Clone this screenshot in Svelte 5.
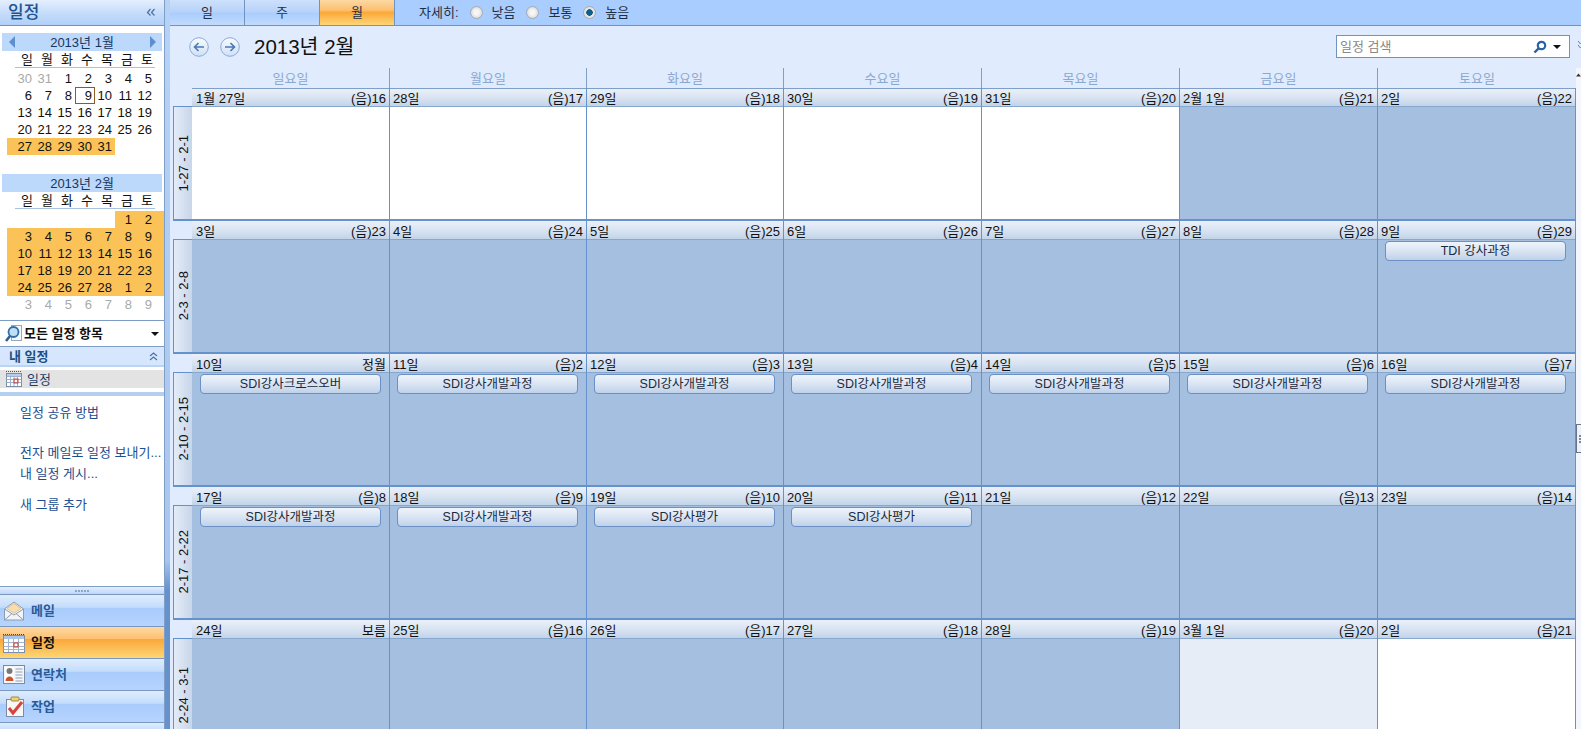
<script>
  const jan = [
    [[30,1],[31,1],[1],[2],[3],[4],[5]],
    [[6],[7],[8],[9,0,1],[10],[11],[12]],
    [[13],[14],[15],[16],[17],[18],[19]],
    [[20],[21],[22],[23],[24],[25],[26]],
    [[27,0,0,1],[28,0,0,1],[29,0,0,1],[30,0,0,1],[31,0,0,1]]
  ];
  const feb = [
    [[''],[''],[''],[''],[''],[1,0,0,1],[2,0,0,1]],
    [3,4,5,6,7,8,9].map(d=>[d,0,0,1]),
    [10,11,12,13,14,15,16].map(d=>[d,0,0,1]),
    [17,18,19,20,21,22,23].map(d=>[d,0,0,1]),
    [24,25,26,27,28,1,2].map(d=>[d,0,0,1]),
    [3,4,5,6,7,8,9].map(d=>[d,1])
  ];
  const wd = ['일','월','화','수','목','금','토'];
  const names = ['일요일','월요일','화요일','수요일','목요일','금요일','토요일'];
  const W='w', B='b', L='l';
  const weeks = [
    {label:'1-27 - 2-1', days:[['1월 27일','(음)16',W],['28일','(음)17',W],['29일','(음)18',W],['30일','(음)19',W],['31일','(음)20',W],['2월 1일','(음)21',B],['2일','(음)22',B]]},
    {label:'2-3 - 2-8', days:[['3일','(음)23',B],['4일','(음)24',B],['5일','(음)25',B],['6일','(음)26',B],['7일','(음)27',B],['8일','(음)28',B],['9일','(음)29',B,'TDI 강사과정']]},
    {label:'2-10 - 2-15', days:[['10일','정월',B,'SDI강사크로스오버'],['11일','(음)2',B,'SDI강사개발과정'],['12일','(음)3',B,'SDI강사개발과정'],['13일','(음)4',B,'SDI강사개발과정'],['14일','(음)5',B,'SDI강사개발과정'],['15일','(음)6',B,'SDI강사개발과정'],['16일','(음)7',B,'SDI강사개발과정']]},
    {label:'2-17 - 2-22', days:[['17일','(음)8',B,'SDI강사개발과정'],['18일','(음)9',B,'SDI강사개발과정'],['19일','(음)10',B,'SDI강사평가'],['20일','(음)11',B,'SDI강사평가'],['21일','(음)12',B],['22일','(음)13',B],['23일','(음)14',B]]},
    {label:'2-24 - 3-1', days:[['24일','보름',B],['25일','(음)16',B],['26일','(음)17',B],['27일','(음)18',B],['28일','(음)19',B],['3월 1일','(음)20',L],['2일','(음)21',W]]}
  ];
</script>

{#snippet month(title, rows, arrows)}
  <div class="mhead">
    {#if arrows}<svg class="marr" width="8" height="14" viewBox="0 0 8 14"><path d="M7 1v12L1 7z" fill="#5d8fd0"/></svg>{/if}
    <span>{title}</span>
    {#if arrows}<svg class="marr r" width="8" height="14" viewBox="0 0 8 14"><path d="M1 1v12l6-6z" fill="#5d8fd0"/></svg>{/if}
  </div>
  <div class="wds">{#each wd as w}<span>{w}</span>{/each}</div>
  <div class="days">
    {#each rows as r}
      <div class="drow">
        {#each r as c, i}
          <span class="d" class:mut={c[1]} class:today={c[2]} class:sel={c[3]} class:first={i===0} class:last={i===6}>{c[0]}</span>
        {/each}
      </div>
    {/each}
  </div>
{/snippet}

<div class="app">
  <aside class="side">
    <div class="stitle"><span>일정</span>
      <svg width="10" height="9" viewBox="0 0 10 9"><path d="M4.500 1 1.500 4.500l3 3M8.500 1l-3 3.500 3 3" fill="none" stroke="#4c6f9e" stroke-width="1.200"/></svg>
    </div>
    <div class="cal">
      {@render month('2013년 1월', jan, true)}
      <div class="gap"></div>
      {@render month('2013년 2월', feb, false)}
    </div>
    <div class="all">
      <svg width="19" height="19" viewBox="0 0 19 19"><rect x="7.500" y="1.500" width="10" height="15" fill="#f6f9fc" stroke="#9aa8bc"/><circle cx="9.500" cy="8" r="5" fill="#bfe0f4" stroke="#2f6ea8" stroke-width="1.800"/><path d="M6 12 2 17" stroke="#2f5f94" stroke-width="2.600"/></svg>
      <b>모든 일정 항목</b>
      <i class="tri"></i>
    </div>
    <div class="mine"><span>내 일정</span>
      <svg width="9" height="9" viewBox="0 0 9 9"><path d="M1 4 4.500 1 8 4M1 8l3.500-3L8 8" fill="none" stroke="#4c6f9e" stroke-width="1.100"/></svg>
    </div>
    <div class="item">
      <svg width="16" height="16" viewBox="0 0 16 16"><rect x=".5" y="2.500" width="15" height="13" fill="#fff" stroke="#7d8fa8"/><path d="M0 .5h16" stroke="#555" stroke-dasharray="1 1"/><rect x="1" y="3" width="14" height="2" fill="#b9cfe8"/><path d="M.5 5.500h15M.5 8.500h15M.5 11.500h15M4.500 5v10M8 5v10M11.500 5v10" stroke="#9db0cc"/><rect x="8" y="8" width="4" height="4" fill="none" stroke="#c8453a"/></svg>
      <span>일정</span>
    </div>
    <div class="bar"></div>
    <div class="links">
      <a class="l1">일정 공유 방법</a>
      <a class="l2">전자 메일로 일정 보내기...</a>
      <a class="l3">내 일정 게시...</a>
      <a class="l4">새 그룹 추가</a>
    </div>
    <div class="split"><i></i><i></i><i></i><i></i><i></i></div>
    <div class="nav">
      <svg width="22" height="22" viewBox="0 0 22 22"><path d="M1.500 9 11 2l9.500 7v11h-19z" fill="#f2f4f7" stroke="#8d9cb0"/><path d="M4 8.500 11 3.500l7 5-7 4.500z" fill="#f7deb0" stroke="#e0c48c"/><path d="M1.500 9 11 15l9.500-6M1.500 20 9 13.500M20.500 20 13 13.500" fill="none" stroke="#8d9cb0"/></svg>
      <span>메일</span>
    </div>
    <div class="nav act">
      <svg width="22" height="22" viewBox="0 0 22 22"><rect x=".5" y="3.500" width="21" height="17" fill="#fff" stroke="#7d8fa8"/><path d="M0 2.500h22" stroke="#444" stroke-dasharray="1 1"/><rect x="1" y="4" width="20" height="3" fill="#a9c6e8"/><path d="M.5 10.500h21M.5 14.500h21M.5 17.500h21M5.500 7v13M10.500 7v13M15.500 7v13" stroke="#a3b3c9"/><rect x="11" y="11" width="4" height="4" fill="none" stroke="#cc3a2a"/></svg>
      <span>일정</span>
    </div>
    <div class="nav">
      <svg width="22" height="20" viewBox="0 0 22 20"><rect x=".5" y=".5" width="21" height="18" fill="#f4f6f9" stroke="#7d8ca0"/><rect x="2" y="2" width="9" height="15" fill="#fff"/><circle cx="6.500" cy="6" r="3" fill="#7a7a7a"/><path d="M2.500 16c0-6 8-6 8 0z" fill="#c9542c"/><path d="M12.500 4h7M12.500 7h7M12.500 10h7M12.500 13h7M12.500 16h7" stroke="#8fa0b8"/></svg>
      <span>연락처</span>
    </div>
    <div class="nav">
      <svg width="22" height="22" viewBox="0 0 22 22"><rect x="3.500" y="3.500" width="17" height="17" fill="#f7f7f7" stroke="#7d8ca0"/><rect x="8" y="1" width="8" height="4" rx="1" fill="#f0d070" stroke="#a08a40"/><path d="M6 12l4 5 9-11" fill="none" stroke="#d8433c" stroke-width="3"/></svg>
      <span>작업</span>
    </div>
    <div class="nav stub"></div>
  </aside>
  <div class="sep"></div>
  <main class="main">
    <div class="tool">
      <div class="tab">일</div><div class="tab">주</div><div class="tab on">월</div>
      <div class="detail">
        <span>자세히:</span>
        <i class="radio"></i><span>낮음</span>
        <i class="radio"></i><span>보통</span>
        <i class="radio chk"></i><span>높음</span>
      </div>
    </div>
    <div class="top">
      <svg width="20" height="20" viewBox="0 0 20 20"><defs><linearGradient id="rb" x1="0" y1="0" x2="0" y2="1"><stop offset="0" stop-color="#f7fbff"/><stop offset="1" stop-color="#cfe0f6"/></linearGradient></defs><circle cx="10" cy="10" r="9.300" fill="url(#rb)" stroke="#8aa9d4"/><path d="M15 10H6M9.500 6 5.500 10l4 4" fill="none" stroke="#4a78b4" stroke-width="1.600"/></svg>
      <svg class="nx" width="20" height="20" viewBox="0 0 20 20"><circle cx="10" cy="10" r="9.300" fill="url(#rb)" stroke="#8aa9d4"/><path d="M5 10h9M10.500 6l4 4-4 4" fill="none" stroke="#4a78b4" stroke-width="1.600"/></svg>
      <h1>2013년 2월</h1>
      <div class="search"><span>일정 검색</span>
        <svg width="14" height="14" viewBox="0 0 14 14"><circle cx="8.500" cy="5.500" r="3.700" fill="#fff" stroke="#2a62a8" stroke-width="2.200"/><path d="M5.500 8.500 1.500 12.500" stroke="#2a5f9e" stroke-width="2.400"/></svg>
        <i class="tri"></i>
      </div>
      <svg class="more" width="7" height="9" viewBox="0 0 7 9"><path d="M1 1l2.500 3L6 1M1 5l2.500 3L6 5" fill="none" stroke="#5f7ea6"/></svg>
    </div>
    <div class="grid">
      <div class="names">
        {#each names as n}<div>{n}</div>{/each}
      </div>
      {#each weeks as w}
        <div class="week">
          <div class="wl"><span>{w.label}</span></div>
          <div class="cols">
            {#each w.days as d}
              <div class="col">
                <div class="dh"><span>{d[0]}</span><span>{d[1]}</span></div>
                <div class="dbody {d[2]}">
                  {#if d[3]}<div class="ev">{d[3]}</div>{/if}
                </div>
              </div>
            {/each}
          </div>
        </div>
      {/each}
      <div class="sb"><svg width="5" height="4" viewBox="0 0 5 4"><path d="M0 3.500 2.500 .5 5 3.500z" fill="#333"/></svg></div>
      <div class="grip"><i></i><i></i><i></i></div>
    </div>
  </main>
</div>

<style>
  :global(body){margin:0;background:#fff;overflow:hidden}
  .app{display:flex;width:1581px;height:729px;overflow:hidden;font:13px/1 "Liberation Sans","Noto Sans CJK KR",sans-serif;color:#111}
  .side{width:164px;flex:none;display:flex;flex-direction:column;background:#fff;height:729px;overflow:hidden}
  .side > *{flex:none}
  .sep{width:6px;flex:none;box-sizing:border-box;border-left:1px solid #7f9fc7;background:linear-gradient(#b6d2f7 0,#a8c6ee 560px,#6591cd 590px,#6591cd 100%)}
  .stitle{height:25px;border-bottom:1px solid #6f94c0;display:flex;align-items:center;justify-content:space-between;padding:0 8px;background:linear-gradient(#e3effe,#c4dbfb 55%,#b2d0f8)}
  .stitle span{font-size:17px;color:#1c5490;font-weight:500}
  .cal{height:294px;padding-top:7px;box-sizing:border-box}
  .mhead{height:18px;margin:0 2px;background:#bcd8fb;display:flex;align-items:center;justify-content:center;position:relative;color:#15365f}
  .marr{position:absolute;left:6px;top:2px}
  .marr.r{left:auto;right:5px}
  .wds{display:grid;grid-template-columns:repeat(7,20px);margin:0 9px 0 15px;padding-left:2px;height:16px;border-bottom:1px solid #a9c2e0;align-items:center;text-align:center}
  .days{margin-top:2px}
  .drow{display:flex;height:17px;padding-left:7px}
  .d{width:20px;height:17px;box-sizing:border-box;text-align:right;padding-right:3px;line-height:17px}
  .d.first{width:28px}
  .d.last{width:29px;padding-right:12px}
  .mut{color:#a9a9a9}
  .sel{background:#fbc357}
  .today{border:1px solid #8f5b25;line-height:15px;padding-right:2px}
  .gap{height:19px}
  .all{height:25px;border-top:1px solid #7d9dc6;border-bottom:1px solid #7d9dc6;display:flex;align-items:center;padding-left:4px;gap:1px;position:relative}
  .all b{font-size:13px;color:#111}
  .tri{width:0;height:0;border:solid transparent;border-width:4px 4px 0;border-top-color:#111;display:block}
  .all .tri{position:absolute;right:5px;top:11px}
  .mine{height:18px;background:#d6e7fd;border-bottom:2px solid #bcd4f3;display:flex;align-items:center;justify-content:space-between;padding:0 6px 0 9px;color:#1d4f86;font-weight:700;font-size:13px}
  .item{height:18px;margin-top:3px;background:#e3e3e3;display:flex;align-items:center;gap:5px;padding-left:6px;color:#1d3f66}
  .bar{height:4px;margin-top:4px;background:#b4cfef}
  .links{height:190px;position:relative;color:#1d4f8f}
  .links a{position:absolute;left:20px;white-space:nowrap}
  .l1{top:10px}.l2{top:50px}.l3{top:71px}.l4{top:102px}
  .split{height:7px;border-top:1px solid #7d9dc6;display:flex;align-items:center;justify-content:center;gap:1px;background:linear-gradient(#e3effe,#bcd6f9)}
  .split i{width:2px;height:2px;background:#8aa7cc}
  .nav{height:31px;border-top:1px solid #7a98bf;display:flex;align-items:center;padding-left:3px;gap:6px;background:linear-gradient(#dfedfe,#c3dcfc 40%,#a9ccfd 42%,#b6d4fd);color:#2a5b97;font-weight:700;font-size:13px;overflow:hidden}
  .nav.act{background:linear-gradient(#fdd9a3,#fdc070 38%,#fba83a 40%,#fed676);color:#111}
  .nav.stub{height:20px}
  .main{flex:1;display:flex;flex-direction:column;background:#e0ecfe;min-width:0}
  .tool{height:25px;flex:none;background:#a9cdfe;border-bottom:1px solid #6f94c0;display:flex;align-items:stretch}
  .tab{width:74px;border-right:1px solid #6f94c0;display:flex;align-items:center;justify-content:center;background:linear-gradient(#cde0fc,#b7d3f8 48%,#a9cdfe 52%,#c2dbfd);color:#1d2f45;font-size:13px}
  .tab.on{background:linear-gradient(#fdd9a3,#fdc070 40%,#fba83a 50%,#fed676)}
  .detail{display:flex;align-items:center;margin-left:24px;font-size:13px;color:#1d2f45}
  .radio{width:13px;height:13px;border-radius:50%;background:radial-gradient(#f6f6f6 30%,#c9c9c9);border:1px solid #a4acb5;margin:0 9px 0 11px;box-sizing:border-box}
  .radio.chk{background:radial-gradient(#0c5f8c 0 3px,#e3e3e3 3.500px)}
  .top{height:42px;flex:none;display:flex;align-items:center;padding-left:19px;position:relative}
  .top .nx{margin-left:11px}
  h1{margin:0 0 0 14px;font-weight:400;font-size:20.5px;color:#111}
  .search{position:absolute;left:1166px;top:9px;width:234px;height:23px;background:#fff;border:1px solid #6f94c0;box-sizing:border-box;display:flex;align-items:center;padding:0 8px 0 3px;color:#888}
  .search span{flex:1}
  .search .tri{margin-left:6px}
  .more{position:absolute;left:1407px;top:14px}
  .grid{flex:1;position:relative;overflow:hidden;min-height:0}
  .names{display:grid;grid-template-columns:198px 197px 197px 198px 198px 198px 198px;height:20px;margin-left:22px;width:1384px;box-sizing:border-box}
  .names div{border-right:1px solid #7f9fc7;color:#8aa8d0;display:flex;align-items:center;justify-content:center}
  .names div:last-child{border-right:0}
  .week{display:flex;height:133px;margin-left:3px}
  .week:nth-child(2) .dh{border-top:1px solid #7f9fc7;padding-top:1px}
  .wl{width:19px;margin-top:18px;height:115px;border:1px solid #6591cd;border-right:0;box-sizing:border-box;background:linear-gradient(90deg,#e3ecf8,#c8d6ea);display:flex;align-items:center;justify-content:center;border-bottom-width:2px;flex:none}
  .wl span{writing-mode:vertical-rl;transform:rotate(180deg);white-space:nowrap}
  .cols{display:grid;grid-template-columns:198px 197px 197px 198px 198px 198px 198px;width:1384px}
  .col{min-width:0;border-right:1px solid #6591cd;display:flex;flex-direction:column;box-sizing:border-box}
  .dh{height:19px;box-sizing:border-box;flex:none;display:flex;justify-content:space-between;align-items:center;padding:2px 3px 0 4px;background:linear-gradient(#eaf0f9,#d9e4f2 50%,#c2d4e9);border-bottom:1px solid #88a7cf}
  .col:not(:first-child) .dh{padding-left:3px}
  .dbody{height:114px;flex:none;border-bottom:2px solid #6591cd;box-sizing:border-box;padding-top:1px}
  .b{background:#a5bfe1}
  .w{background:#fff}
  .l{background:#e6edf7}
  .ev{height:20px;margin:0 8px;box-sizing:border-box;border:1px solid #6a90c6;border-radius:4px;background:linear-gradient(#eff4fb,#d5e1f1 60%,#bfd1ea);display:flex;align-items:center;justify-content:center;color:#1b2a3c;font-size:12.5px}
  .col:not(:first-child) .ev{margin-left:7px}
  .col:nth-child(n+4) .ev{margin-right:9px}
  .sb{position:absolute;left:1406px;top:0;width:5px;height:100%;background:#f3f7fd;display:flex;justify-content:center;padding-top:5px;box-sizing:border-box}
  .grip{position:absolute;left:1406px;top:356px;width:5px;height:29px;background:#eef3fb;border:1px solid #6a7488;border-right:0;box-sizing:border-box;display:flex;flex-direction:column;justify-content:center;align-items:flex-end;gap:1px}
  .grip i{width:2px;height:2px;background:#7f8a99}
</style>
